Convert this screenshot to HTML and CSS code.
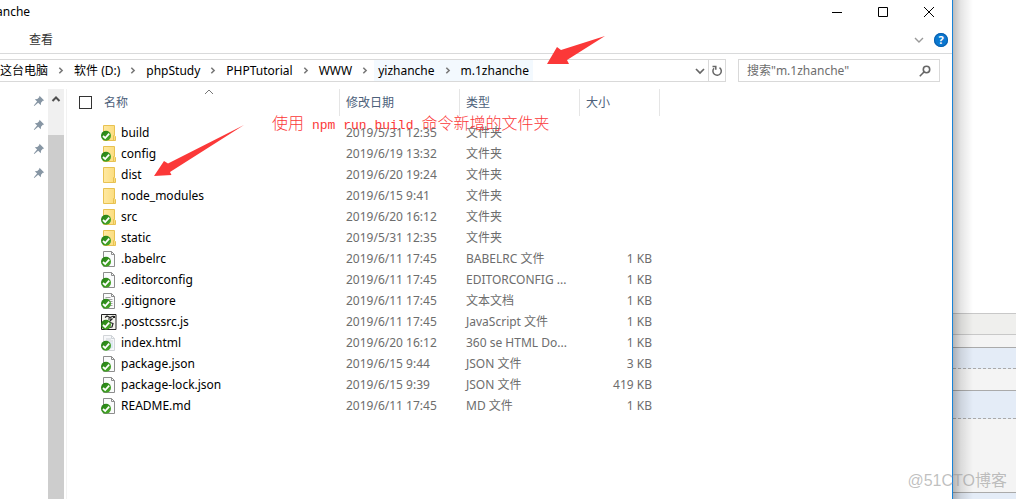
FILE: index.html
```html
<!DOCTYPE html>
<html lang="zh-CN">
<head>
<meta charset="utf-8">
<title>m.1zhanche</title>
<link rel="stylesheet" href="styles.css">
</head>
<body>
<svg class="sprite" aria-hidden="true">
  <defs>
    <linearGradient id="fill-folder" x1="0" x2="1"><stop offset="0" stop-color="#ffe9a2"/><stop offset="1" stop-color="#fbdc7c"/></linearGradient>
    <linearGradient id="fill-tick" x1="0" x2="1" y2="1"><stop offset="0" stop-color="#1f7a12"/><stop offset="1" stop-color="#4fae2c"/></linearGradient>
  </defs>
  <symbol id="folder" viewBox="0 0 16 16"><path d="M2.500.5h11v10l1 1v4h-12z" fill="url(#fill-folder)" stroke="#e8c252"/><path d="M12.500 15v-4.500l1-1" fill="none" stroke="#e8c252"/></symbol>
  <symbol id="tick" viewBox="0 0 16 16"><circle cx="5" cy="10.800" r="5" fill="url(#fill-tick)"/><path d="M2 11l2.200 2L8.200 8.700" fill="none" stroke="#fff" stroke-width="1.800"/></symbol>
  <symbol id="page" viewBox="0 0 16 16"><path d="M2.500.5h8l3 3v12h-11z" fill="#fafbfc" stroke="#8d8d8d"/><path d="M10.500.5v3h3" fill="none" stroke="#8d8d8d"/></symbol>
  <symbol id="text" viewBox="0 0 16 16"><use href="#page"/><path d="M4.500 4.500h5M4.500 6.500h7M4.500 8.500h7M6 10.500h5.500M8 12.500h3.500" stroke="#a2a2a2"/></symbol>
  <symbol id="html" viewBox="0 0 16 16"><path d="M2.500.5h8l3 3v12h-11z" fill="#f7f8fa" stroke="#d2d5d8"/><path d="M10.500.5v3h3M5 4h5M5 6h7" fill="none" stroke="#cdd2d7"/><path d="M7 8l5-1v6l-4 1z" fill="#dce9f2"/></symbol>
  <symbol id="script" viewBox="0 0 16 16"><path d="M.5.5h14.500v15H.5z" fill="#f4f4ee" stroke="#222"/><path d="M4 3.500l2-1.500 3 1.500L12.500 2M7 5h4L8 8l4 1.500-1 3.500-3 .5" fill="none" stroke="#222" stroke-width="1.200"/><path d="M12 2h2v2h-2z" fill="#222"/></symbol>
  <symbol id="sep" viewBox="0 0 16 16"><path d="M6.500 5.500L9 8l-2.500 2.500" fill="none" stroke="#777" stroke-width="1.400"/></symbol>
  <symbol id="pin" viewBox="0 0 12 12"><path d="M6.500.8l4.700 4.700-1.400.3-1.800 1.900-.2 2.600-2.600-2.500L1.300 11l-.5-.5 3.300-3.900L1.800 4.300l2.500-.2 1.900-1.800z" fill="#8796a4"/></symbol>
</svg>

<div class="screen">
  <main class="window">
    <header class="titlebar">
      <h1 class="title">anche</h1>
      <div class="controls">
        <button aria-label="最小化"><svg viewBox="0 0 12 12"><path d="M1 6.500h10"/></svg></button>
        <button aria-label="最大化"><svg viewBox="0 0 12 12"><path d="M1.500 1.500h9v9h-9z"/></svg></button>
        <button aria-label="关闭"><svg viewBox="0 0 12 12"><path d="M1 1l10 10M11 1L1 11"/></svg></button>
      </div>
    </header>
    <nav class="ribbon">
      <button class="tab">查看</button>
      <div class="ribbon-tools">
        <button class="plain" aria-label="展开功能区"><svg class="expand" viewBox="0 0 10 10"><path d="M1 3l4 4 4-4"/></svg></button>
        <button class="help" aria-label="帮助">?</button>
      </div>
    </nav>
    <div class="address-row">
      <div class="address">
        <div class="crumbs">
          <button>这台电脑</button><svg><use href="#sep"/></svg>
          <button>软件 (D:)</button><svg><use href="#sep"/></svg>
          <button>phpStudy</button><svg><use href="#sep"/></svg>
          <button>PHPTutorial</button><svg><use href="#sep"/></svg>
          <button>WWW</button><svg><use href="#sep"/></svg>
          <button class="lit">yizhanche</button><svg class="lit"><use href="#sep"/></svg>
          <button class="lit">m.1zhanche</button>
        </div>
        <button class="history" aria-label="以前的位置"><svg viewBox="0 0 10 10"><path d="M1 3l4 4 4-4"/></svg></button>
        <button class="refresh" aria-label="刷新"><svg viewBox="0 0 12 12"><path d="M8.500 2.600A4.200 4.200 0 1 1 3 3.200M1.500 1.500h3.300v3.300"/></svg></button>
      </div>
      <form class="search">
        <input type="text" aria-label="搜索" placeholder='搜索"m.1zhanche"'>
        <button class="plain" type="button" aria-label="开始搜索"><svg viewBox="0 0 12 12"><circle cx="7.500" cy="4.500" r="3.200"/><path d="M5.200 6.800L.8 11.200"/></svg></button>
      </form>
    </div>
    <div class="content">
      <aside class="pins">
        <svg><use href="#pin"/></svg><svg><use href="#pin"/></svg><svg><use href="#pin"/></svg><svg><use href="#pin"/></svg>
      </aside>
      <div class="scrollbar">
        <button aria-label="向上滚动"><svg viewBox="0 0 10 10"><path d="M1.500 7L5 3.500 8.500 7"/></svg></button>
        <div class="thumb"></div>
      </div>
      <section class="files">
        <table>
          <colgroup><col class="c-name"><col class="c-date"><col class="c-type"><col class="c-size"></colgroup>
          <thead>
            <tr>
              <th><label class="all"><input type="checkbox" aria-label="全选"><span>名称</span></label><svg class="sort" viewBox="0 0 10 6"><path d="M1 5l4-4 4 4"/></svg></th>
              <th>修改日期</th><th>类型</th><th>大小</th>
            </tr>
          </thead>
          <tbody>
            <tr><td><div class="file"><svg><use href="#folder"/><use href="#tick"/></svg>build</div></td><td>2019/5/31 12:35</td><td>文件夹</td><td></td></tr>
            <tr><td><div class="file"><svg><use href="#folder"/><use href="#tick"/></svg>config</div></td><td>2019/6/19 13:32</td><td>文件夹</td><td></td></tr>
            <tr><td><div class="file"><svg><use href="#folder"/></svg>dist</div></td><td>2019/6/20 19:24</td><td>文件夹</td><td></td></tr>
            <tr><td><div class="file"><svg><use href="#folder"/></svg>node_modules</div></td><td>2019/6/15 9:41</td><td>文件夹</td><td></td></tr>
            <tr><td><div class="file"><svg><use href="#folder"/><use href="#tick"/></svg>src</div></td><td>2019/6/20 16:12</td><td>文件夹</td><td></td></tr>
            <tr><td><div class="file"><svg><use href="#folder"/><use href="#tick"/></svg>static</div></td><td>2019/5/31 12:35</td><td>文件夹</td><td></td></tr>
            <tr><td><div class="file"><svg><use href="#page"/><use href="#tick"/></svg>.babelrc</div></td><td>2019/6/11 17:45</td><td>BABELRC 文件</td><td>1 KB</td></tr>
            <tr><td><div class="file"><svg><use href="#page"/><use href="#tick"/></svg>.editorconfig</div></td><td>2019/6/11 17:45</td><td>EDITORCONFIG ...</td><td>1 KB</td></tr>
            <tr><td><div class="file"><svg><use href="#text"/><use href="#tick"/></svg>.gitignore</div></td><td>2019/6/11 17:45</td><td>文本文档</td><td>1 KB</td></tr>
            <tr><td><div class="file"><svg><use href="#script"/><use href="#tick"/></svg>.postcssrc.js</div></td><td>2019/6/11 17:45</td><td>JavaScript 文件</td><td>1 KB</td></tr>
            <tr><td><div class="file"><svg><use href="#html"/><use href="#tick"/></svg>index.html</div></td><td>2019/6/20 16:12</td><td>360 se HTML Do...</td><td>1 KB</td></tr>
            <tr><td><div class="file"><svg><use href="#page"/><use href="#tick"/></svg>package.json</div></td><td>2019/6/15 9:44</td><td>JSON 文件</td><td>3 KB</td></tr>
            <tr><td><div class="file"><svg><use href="#page"/><use href="#tick"/></svg>package-lock.json</div></td><td>2019/6/15 9:39</td><td>JSON 文件</td><td>419 KB</td></tr>
            <tr><td><div class="file"><svg><use href="#page"/><use href="#tick"/></svg>README.md</div></td><td>2019/6/11 17:45</td><td>MD 文件</td><td>1 KB</td></tr>
          </tbody>
        </table>
      </section>
    </div>
    <p class="note">使用 <code>npm run build</code> 命令新增的文件夹</p>
    <svg class="arrow arrow-path" viewBox="0 0 60 32"><path d="M59 1L21 25l2 4L1 29 11 12l4 3z"/></svg>
    <svg class="arrow arrow-dist" viewBox="0 0 92 54"><path d="M91 1L17 48l1.500 3L1 52 11 37l4 2.500z"/></svg>
  </main>
  <div class="behind" aria-hidden="true">
    <div class="blank"></div><div class="toolbar"></div><div class="gap-small"></div>
    <div class="band"></div><div class="gap-mid"></div><div class="band tall"></div>
    <div class="gap-large"></div><div class="band last"></div>
  </div>
  <div class="watermark">@51CTO博客</div>
</div>
</body>
</html>
```
FILE: styles.css
```css
* { box-sizing: border-box; }
body {
  margin: 0;
  font: 12px/20px "Noto Sans", "Noto Sans CJK SC", sans-serif;
  color: #000;
  background: #fff;
}
button {
  display: flex;
  align-items: center;
  justify-content: center;
  margin: 0;
  padding: 0;
  border: 0;
  background: none;
  font: inherit;
  color: inherit;
}
svg { display: block; flex: none; }
.sprite { position: absolute; width: 0; height: 0; }

.screen { position: relative; display: flex; min-height: 100vh; overflow: hidden; }
.window {
  position: relative;
  flex: 1;
  min-width: 0;
  display: flex;
  flex-direction: column;
  background: #fff;
  border-right: 1px solid #1883d7;
}

.titlebar { display: flex; justify-content: space-between; height: 24px; }
.title { margin: 0 0 0 -4px; font-size: 12px; font-weight: 400; line-height: 24px; }
.controls { display: flex; }
.controls button { width: 46px; height: 24px; }
.controls svg { width: 12px; height: 12px; fill: none; stroke: #000; }

.ribbon {
  display: flex;
  justify-content: space-between;
  align-items: center;
  height: 30px;
  padding: 2px 4px 0 29px;
  border-bottom: 1px solid #d9dadb;
}
.tab { color: #333; }
.ribbon-tools { display: flex; align-items: center; gap: 10px; }
.expand { width: 10px; height: 10px; fill: none; stroke: #999; stroke-width: 1.4; }
.help {
  width: 14px;
  height: 14px;
  border-radius: 50%;
  background: #0a78d0;
  box-shadow: inset 0 0 0 1px #0a5fae;
  color: #fff;
  font-size: 11px;
  font-weight: 700;
  line-height: 14px;
}

.address-row { display: flex; gap: 12px; padding: 5px 12px 0 0; }
.address { flex: 1; min-width: 0; display: flex; height: 23px; border: 1px solid #d9d9d9; border-left: 0; }
.crumbs { flex: 1; min-width: 0; display: flex; }
.crumbs button { flex: none; padding: 0 4px; white-space: nowrap; }
.crumbs button:first-child { padding-left: 0; }
.crumbs svg { width: 18px; height: 21px; }
.crumbs .lit { background: #f3f9fe; }
.history, .refresh { width: 17px; }
.refresh { border-left: 1px solid #d9d9d9; }
.history svg { width: 10px; height: 10px; fill: none; stroke: #666; stroke-width: 1.7; }
.refresh svg { width: 12px; height: 12px; fill: none; stroke: #666; stroke-width: 1.5; }
.search { display: flex; width: 202px; height: 23px; padding: 0 8px; border: 1px solid #d9d9d9; }
.search input { flex: 1; min-width: 0; padding: 0; border: 0; outline: 0; background: none; font: inherit; }
.search input::placeholder { color: #6d6d6d; opacity: 1; }
.search svg { width: 12px; height: 12px; fill: none; stroke: #666; stroke-width: 1.6; }

.content { flex: 1; display: flex; padding-top: 7px; }
.pins { display: flex; flex-direction: column; gap: 12px; width: 48px; padding: 6px 0 0 33px; }
.pins svg { width: 12px; height: 12px; }
.scrollbar { display: flex; flex-direction: column; width: 16px; background: #f0f0f0; }
.scrollbar button { height: 19px; margin-bottom: 27px; }
.scrollbar svg { width: 10px; height: 10px; fill: none; stroke: #505050; stroke-width: 2; }
.thumb { flex: 1; background: #cdcdcd; }
.files { flex: 1; min-width: 0; margin-left: 2px; border-left: 1px solid #f2f2f2; }

table { width: 593px; table-layout: fixed; border-collapse: separate; border-spacing: 0; }
.c-name { width: 273px; }
.c-date, .c-type { width: 120px; }
.c-size { width: 80px; }
th {
  position: relative;
  height: 27px;
  padding: 0 0 0 6px;
  border-right: 1px solid #e5e5e5;
  text-align: left;
  font-weight: 400;
  color: #4c607a;
}
th:first-child { padding-left: 12px; }
.all { display: flex; align-items: center; gap: 12px; }
.all input { appearance: none; width: 13px; height: 13px; margin: 0; border: 1px solid #333; background: #fff; }
.sort { position: absolute; top: 0; left: 137px; width: 10px; height: 6px; fill: none; stroke: #777; }
td { height: 21px; padding: 0 0 0 6px; line-height: 21px; color: #6d6d6d; white-space: nowrap; }
td:first-child { padding-left: 34px; color: #000; }
td:last-child { padding-right: 8px; text-align: right; }
tbody::before { content: ""; display: block; height: 6px; }
.file { display: flex; align-items: center; gap: 4px; }
.file svg { width: 16px; height: 16px; }

.note {
  position: absolute;
  top: 112px;
  left: 272px;
  display: flex;
  align-items: baseline;
  gap: 8px;
  margin: 0;
  font: 300 16px/20px "Noto Sans CJK SC", sans-serif;
  color: #fb3838;
  white-space: nowrap;
}
.note code { font: 13px/20px "Liberation Mono", monospace; }
.arrow { position: absolute; fill: #fb3838; }
.arrow-path { top: 35px; left: 546px; width: 60px; height: 32px; }
.arrow-dist { top: 124px; left: 153px; width: 92px; height: 54px; }

.behind { position: relative; display: flex; flex-direction: column; width: 63px; background: #f4f4f4; }
.behind::after {
  content: "";
  position: absolute;
  inset: 0;
  background: linear-gradient(90deg, rgba(0, 0, 0, .26), rgba(0, 0, 0, .1) 8px, transparent 20px);
}
.blank { height: 313px; background: #fff; }
.toolbar { height: 22px; border: solid #c8c8c8; border-width: 1px 0; background: #efefed; }
.gap-small { height: 12px; }
.gap-mid { height: 21px; }
.gap-large { height: 73px; }
.band { height: 22px; border-top: 1px solid #aaa; border-bottom: 1px dashed #aaa; background: #e4ecf7; }
.tall { height: 29px; }
.last { flex: 1; border-bottom: 0; }

.watermark {
  position: absolute;
  right: 9px;
  bottom: 8px;
  font: 16px/20px "Liberation Sans", "Noto Sans CJK SC", sans-serif;
  color: rgba(150, 150, 150, .6);
}
```
